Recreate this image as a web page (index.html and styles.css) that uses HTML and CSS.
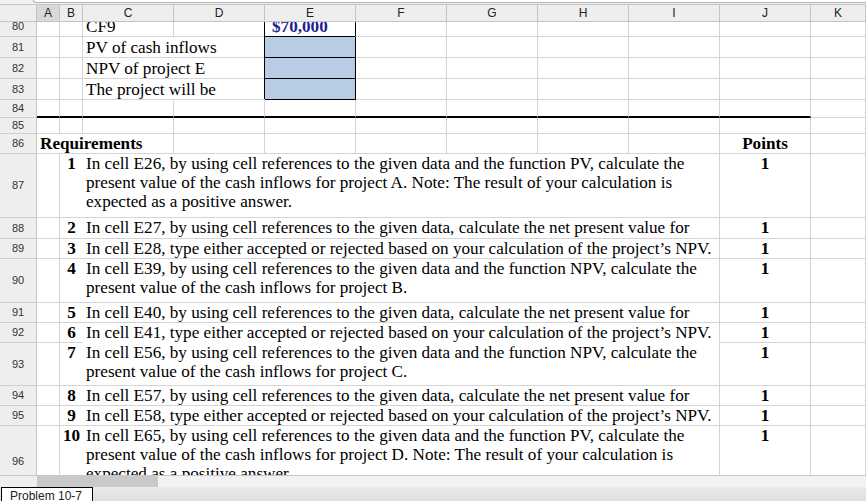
FILE: index.html
```html
<!DOCTYPE html>
<html lang="en">
<head>
    <meta charset="UTF-8">
    <title>Problem 10-7</title>
    <link rel="stylesheet" href="styles.css">
</head>
<body>
<div class="app">
    <div class="formula-edge"><div class="formula-box"></div></div>

    <div class="col-heads">
        <div class="ch corner"></div>
        <div class="ch sel">A</div>
        <div class="ch">B</div>
        <div class="ch">C</div>
        <div class="ch">D</div>
        <div class="ch">E</div>
        <div class="ch">F</div>
        <div class="ch">G</div>
        <div class="ch">H</div>
        <div class="ch">I</div>
        <div class="ch">J</div>
        <div class="ch">K</div>
    </div>

    <div class="viewport">
        <div class="sheet">
            <!-- 80 -->
            <div class="rh">80</div><div class="c"></div><div class="c"></div>
            <div class="c">CF9</div><div class="c"></div><div class="c val">$70,000</div>
            <div class="c"></div><div class="c"></div><div class="c"></div><div class="c"></div><div class="c"></div><div class="c"></div>
            <!-- 81 -->
            <div class="rh">81</div><div class="c"></div><div class="c"></div>
            <div class="c spill">PV of cash inflows</div><div class="c"></div><div class="c input"></div>
            <div class="c"></div><div class="c"></div><div class="c"></div><div class="c"></div><div class="c"></div><div class="c"></div>
            <!-- 82 -->
            <div class="rh">82</div><div class="c"></div><div class="c"></div>
            <div class="c spill">NPV of project E</div><div class="c"></div><div class="c input"></div>
            <div class="c"></div><div class="c"></div><div class="c"></div><div class="c"></div><div class="c"></div><div class="c"></div>
            <!-- 83 -->
            <div class="rh">83</div><div class="c"></div><div class="c"></div>
            <div class="c spill">The project will be</div><div class="c"></div><div class="c input"></div>
            <div class="c"></div><div class="c"></div><div class="c"></div><div class="c"></div><div class="c"></div><div class="c"></div>
            <!-- 84 -->
            <div class="rh">84</div>
            <div class="c thick"></div><div class="c thick"></div><div class="c thick"></div><div class="c thick"></div><div class="c thick"></div>
            <div class="c thick"></div><div class="c thick"></div><div class="c thick"></div><div class="c thick"></div><div class="c thick"></div>
            <div class="c"></div>
            <!-- 85 -->
            <div class="rh">85</div>
            <div class="c"></div><div class="c"></div><div class="c"></div><div class="c"></div><div class="c"></div><div class="c"></div>
            <div class="c"></div><div class="c"></div><div class="c"></div><div class="c"></div><div class="c"></div>
            <!-- 86 -->
            <div class="rh">86</div>
            <div class="c title">Requirements</div>
            <div class="c"></div><div class="c"></div><div class="c"></div><div class="c"></div><div class="c"></div><div class="c"></div>
            <div class="c pts">Points</div><div class="c"></div>
            <!-- 87 -->
            <div class="rh">87</div><div class="c"></div>
            <div class="c num">1</div>
            <div class="c req">In cell E26, by using cell references to the given data and the function PV, calculate the<br>present value of the cash inflows for project A. Note: The result of your calculation is<br>expected as a positive answer.</div>
            <div class="c pts top">1</div><div class="c"></div>
            <!-- 88 -->
            <div class="rh">88</div><div class="c"></div>
            <div class="c num">2</div>
            <div class="c req">In cell E27, by using cell references to the given data, calculate the net present value for</div>
            <div class="c pts top">1</div><div class="c"></div>
            <!-- 89 -->
            <div class="rh">89</div><div class="c"></div>
            <div class="c num">3</div>
            <div class="c req">In cell E28, type either accepted or rejected based on your calculation of the project’s NPV.</div>
            <div class="c pts top">1</div><div class="c"></div>
            <!-- 90 -->
            <div class="rh">90</div><div class="c"></div>
            <div class="c num">4</div>
            <div class="c req">In cell E39, by using cell references to the given data and the function NPV, calculate the<br>present value of the cash inflows for project B.</div>
            <div class="c pts top">1</div><div class="c"></div>
            <!-- 91 -->
            <div class="rh">91</div><div class="c"></div>
            <div class="c num">5</div>
            <div class="c req">In cell E40, by using cell references to the given data, calculate the net present value for</div>
            <div class="c pts top">1</div><div class="c"></div>
            <!-- 92 -->
            <div class="rh">92</div><div class="c"></div>
            <div class="c num">6</div>
            <div class="c req open">In cell E41, type either accepted or rejected based on your calculation of the project’s NPV.</div>
            <div class="c pts top">1</div><div class="c"></div>
            <!-- 93 -->
            <div class="rh">93</div><div class="c"></div>
            <div class="c num">7</div>
            <div class="c req">In cell E56, by using cell references to the given data and the function NPV, calculate the<br>present value of the cash inflows for project C.</div>
            <div class="c pts top">1</div><div class="c"></div>
            <!-- 94 -->
            <div class="rh">94</div><div class="c"></div>
            <div class="c num">8</div>
            <div class="c req">In cell E57, by using cell references to the given data, calculate the net present value for</div>
            <div class="c pts top">1</div><div class="c"></div>
            <!-- 95 -->
            <div class="rh">95</div><div class="c"></div>
            <div class="c num">9</div>
            <div class="c req">In cell E58, type either accepted or rejected based on your calculation of the project’s NPV.</div>
            <div class="c pts top">1</div><div class="c"></div>
            <!-- 96 -->
            <div class="rh">96</div><div class="c"></div>
            <div class="c num">10</div>
            <div class="c req">In cell E65, by using cell references to the given data and the function PV, calculate the<br>present value of the cash inflows for project D. Note: The result of your calculation is<br>expected as a positive answer.</div>
            <div class="c pts top">1</div><div class="c"></div>
        </div>
    </div>

    <div class="hscroll">
        <div class="hs-gap"></div>
        <div class="hs-thumb"></div>
        <div class="hs-track"></div>
    </div>

    <div class="tabs">
        <div class="tab">Problem 10-7</div>
    </div>
</div>
</body>
</html>
```

FILE: styles.css
```css
html, body {
    margin: 0;
    padding: 0;
}
body {
    width: 866px;
    height: 501px;
    overflow: hidden;
    background-color: #fff;
    font-family: "Liberation Sans", Arial, sans-serif;
    color: #000;
}
.app {
    display: flex;
    flex-direction: column;
    height: 501px;
}

/* bottom edge of the formula bar */
.formula-edge {
    flex: none;
    height: 4px;
    background: #f0f0f0;
}
.formula-box {
    margin-left: 33px;
    height: 2px;
    background: #fff;
    border-left: 1px solid #b4b4b4;
    border-bottom: 1px solid #b4b4b4;
    border-bottom-left-radius: 3px;
}

/* column headers */
.col-heads {
    flex: none;
    display: grid;
    grid-template-columns: 37px 23px 23px repeat(8, 91px) 55px;
    height: 18px;
    box-sizing: border-box;
    border-top: 1px solid #c4c4c4;
}
.ch {
    box-sizing: border-box;
    background: #eeeeee;
    border-right: 1px solid #c4c4c4;
    border-bottom: 1px solid #c4c4c4;
    font-size: 12px;
    line-height: 16px;
    text-align: center;
    color: #222;
}
.ch.sel {
    background: #d9d9d9;
}

/* cell area */
.viewport {
    flex: none;
    height: 453px;
    overflow: hidden;
}
.sheet {
    display: grid;
    grid-template-columns: 37px 23px 23px repeat(8, 91px) 55px;
    grid-template-rows: 21px 21px 21px 21px 18px 16px 20px 64px 21px 20px 44px 20px 20px 43px 20px 20px 72px;
    margin-top: -6px;
    font-family: "Liberation Serif", "Times New Roman", serif;
    font-size: 17.15px;
    line-height: 19px;
}
.rh {
    display: flex;
    align-items: center;
    justify-content: center;
    box-sizing: border-box;
    background: #eeeeee;
    border-right: 1px solid #c4c4c4;
    border-bottom: 1px solid #cfcfcf;
    font-family: "Liberation Sans", Arial, sans-serif;
    font-size: 11px;
    color: #333;
}
.c {
    display: flex;
    align-items: flex-end;
    min-width: 0;
    box-sizing: border-box;
    padding: 0 3px;
    border-right: 1px solid #d4d4d4;
    border-bottom: 1px solid #d4d4d4;
    overflow: hidden;
    white-space: nowrap;
}
.top {
    align-items: flex-start;
}
.thick {
    border-bottom: 2px solid #000;
}
/* text running on into the empty cell to its right */
.spill {
    overflow: visible;
    border-right-color: transparent;
}

.val {
    padding-left: 7px;
    color: #1f1f8f;
    font-weight: bold;
    border-right-color: #000;
    box-shadow: -1px 0 0 #000;
}
.input {
    background: #b8cce4;
    border-right-color: #000;
    border-bottom-color: #000;
    box-shadow: -1px -1px 0 #000;
}

.title {
    grid-column: span 3;
    font-weight: bold;
}
.pts {
    justify-content: center;
    font-weight: bold;
}
.num {
    align-items: flex-start;
    justify-content: center;
    padding: 0;
    border-right: none;
    font-weight: bold;
}
.req {
    grid-column: span 7;
    align-items: flex-start;
}
.req.open {
    border-bottom-color: transparent;
}

/* horizontal scrollbar */
.hscroll {
    flex: none;
    display: flex;
    height: 12px;
    box-sizing: border-box;
    border-top: 1px solid #c8c8c8;
}
.hs-gap {
    width: 37px;
    background: #eeeeee;
}
.hs-thumb {
    width: 121px;
    background: #c9c9c9;
}
.hs-track {
    flex: 1;
    background: #f2f2f2;
}

/* sheet tabs */
.tabs {
    flex: none;
    display: flex;
    height: 14px;
    background: linear-gradient(#ebebeb, #dedede);
}
.tab {
    margin-left: 1px;
    width: 92px;
    height: 16px;
    box-sizing: border-box;
    padding: 1px 0 0 8px;
    background: #fff;
    border: 1px solid #000;
    border-bottom: none;
    font-size: 12px;
    line-height: 14px;
    color: #222;
}
```
